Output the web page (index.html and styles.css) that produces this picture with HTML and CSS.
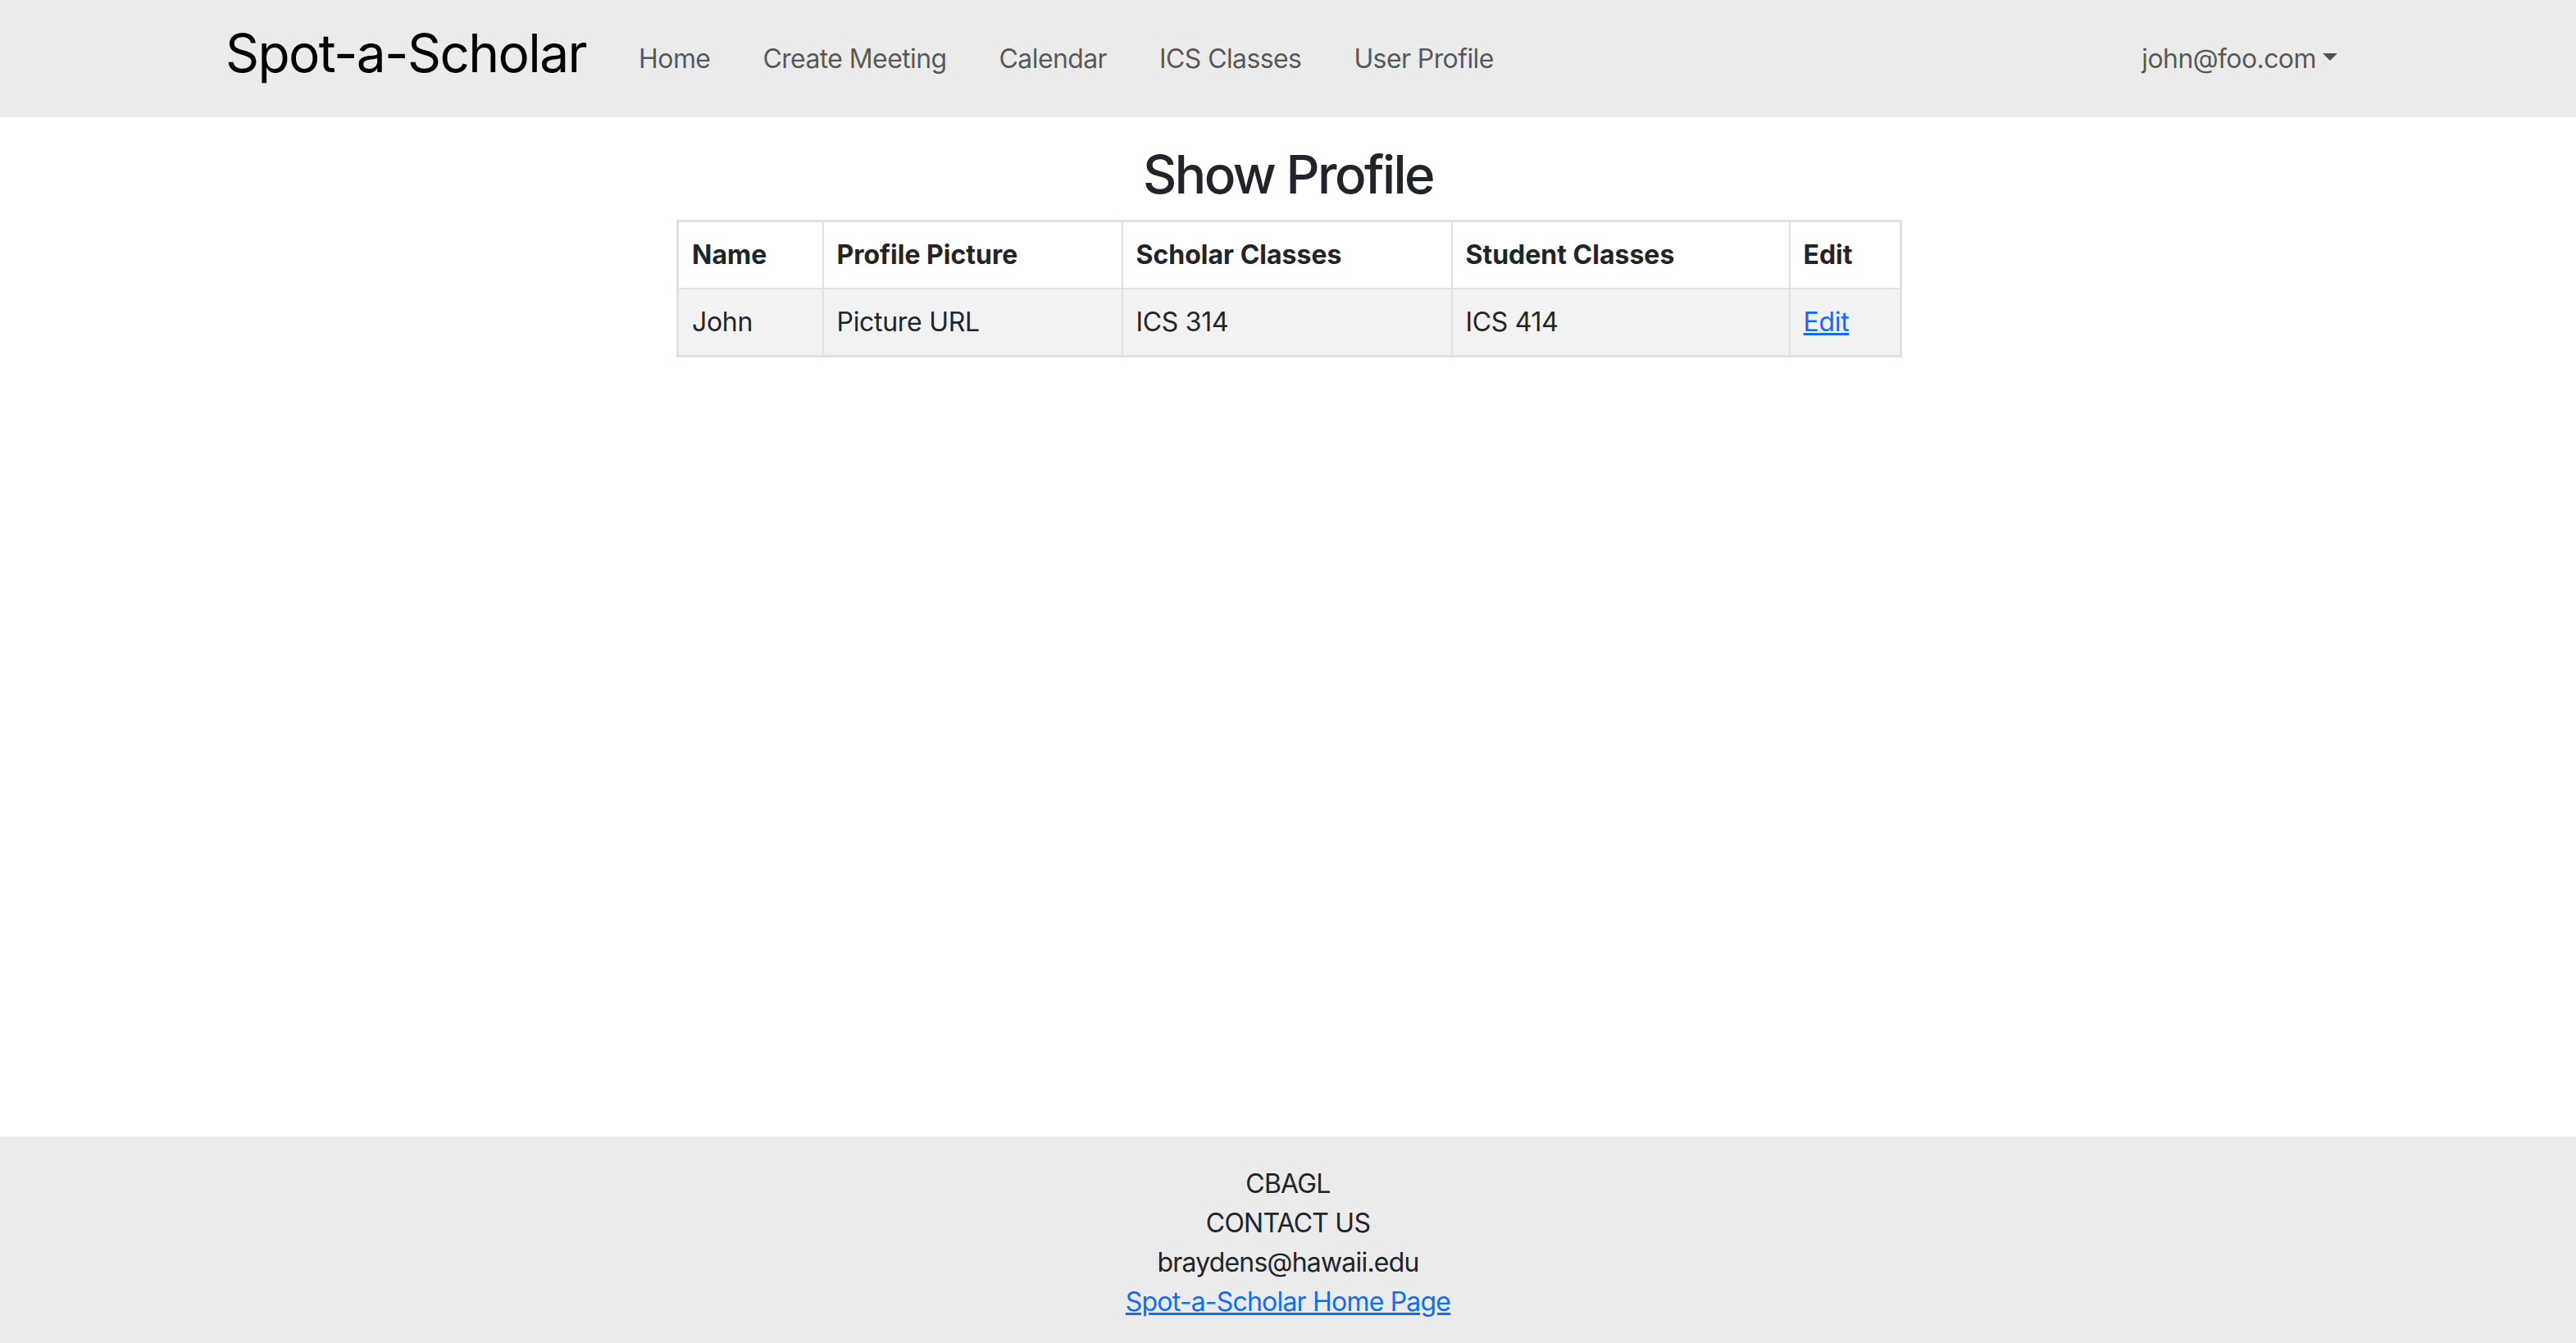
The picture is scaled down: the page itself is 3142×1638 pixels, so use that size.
FILE: index.html
```html
<!DOCTYPE html>
<html lang="en">
<head>
<meta charset="UTF-8" />
<meta name="viewport" content="width=device-width, initial-scale=1" />
<title>Spot-a-Scholar</title>
<link rel="stylesheet" href="styles.css">
</head>
<body>
<nav class="navbar">
  <div class="container nav-inner">
    <a class="brand" href="#">Spot-a-Scholar</a>
    <ul class="nav-links">
      <li><a href="#">Home</a></li>
      <li><a href="#">Create Meeting</a></li>
      <li><a href="#">Calendar</a></li>
      <li><a href="#">ICS Classes</a></li>
      <li><a href="#">User Profile</a></li>
    </ul>
    <a class="user-menu dropdown-toggle" href="#">john@foo.com</a>
  </div>
</nav>

<main class="page">
  <div class="profile">
    <h2>Show Profile</h2>
    <table class="profile-table">
      <colgroup>
        <col class="col-name">
        <col class="col-picture">
        <col class="col-scholar">
        <col class="col-student">
        <col class="col-edit">
      </colgroup>
      <thead>
        <tr>
          <th>Name</th>
          <th>Profile Picture</th>
          <th>Scholar Classes</th>
          <th>Student Classes</th>
          <th>Edit</th>
        </tr>
      </thead>
      <tbody>
        <tr>
          <td>John</td>
          <td>Picture URL</td>
          <td>ICS 314</td>
          <td>ICS 414</td>
          <td><a href="#">Edit</a></td>
        </tr>
      </tbody>
    </table>
  </div>
</main>

<footer class="footer">
  <div>CBAGL</div>
  <div>CONTACT US</div>
  <div>braydens@hawaii.edu</div>
  <div><a href="#">Spot-a-Scholar Home Page</a></div>
</footer>
</body>
</html>
```

FILE: styles.css
```css
:root {
  --text-color: #212529;
  --bar-bg: #ebebeb;
  --link-color: #0d6efd;
  --border-color: #dee2e6;
  --nav-color: rgba(0, 0, 0, 0.65);
}
html, body {
  margin: 0;
  padding: 0;
}
body {
  font-family: Inter, "Noto Sans", "Liberation Sans", sans-serif;
  font-size: 32px;
  line-height: 1.5;
  letter-spacing: -0.3px;
  color: var(--text-color);
  background: #fff;
  min-height: 100vh;
  display: flex;
  flex-direction: column;
}
a {
  color: var(--link-color);
}
.container {
  max-width: 2640px;
  margin: 0 auto;
  padding: 0 24px;
  box-sizing: border-box;
  width: 100%;
}
.navbar {
  background: var(--bar-bg);
  height: 143px;
  display: flex;
  align-items: center;
}
.nav-inner {
  display: flex;
  align-items: center;
}
.brand {
  font-size: 64px;
  line-height: 1;
  color: #000;
  text-decoration: none;
  margin-right: 32px;
  padding-bottom: 14px;
  letter-spacing: -1.6px;
}
.nav-links {
  list-style: none;
  display: flex;
  margin: 0;
  padding: 0;
  flex: 1;
}
.nav-links a,
.user-menu {
  display: block;
  padding: 16px 32px;
  color: var(--nav-color);
  text-decoration: none;
  letter-spacing: -0.6px;
}
.user-menu {
  padding-right: 16px;
}
.dropdown-toggle::after {
  content: "";
  display: inline-block;
  margin-left: 0.255em;
  vertical-align: 0.255em;
  border-top: 0.3em solid;
  border-right: 0.3em solid transparent;
  border-left: 0.3em solid transparent;
}
.page {
  flex: 1;
  padding-top: 32px;
}
.profile {
  width: 1492px;
  margin: 0 auto;
}
h2 {
  font-size: 64px;
  font-weight: 500;
  line-height: 1.2;
  text-align: center;
  margin: 0 0 16px 0;
  letter-spacing: -2.6px;
}
.profile-table {
  width: 100%;
  border-collapse: collapse;
  table-layout: fixed;
  border: 3px solid var(--border-color);
}
.col-name { width: 177px; }
.col-picture { width: 365px; }
.col-scholar { width: 402px; }
.col-student { width: 412px; }
.col-edit { width: 136px; }
.profile-table th,
.profile-table td {
  text-align: left;
  padding: 16px 16px;
  border: 2px solid var(--border-color);
  white-space: nowrap;
}
.profile-table th {
  font-weight: 700;
  letter-spacing: 0;
}
.profile-table tbody tr {
  background: #f2f2f2;
}
.footer {
  background: var(--bar-bg);
  text-align: center;
  padding: 34px 0 26px 0;
  letter-spacing: -0.8px;
}
```
